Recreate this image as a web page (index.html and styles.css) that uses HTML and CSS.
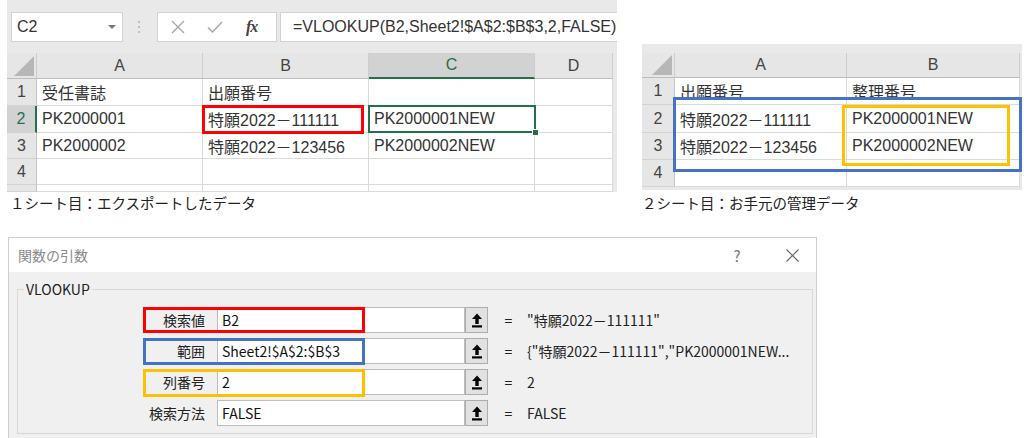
FILE: index.html
```html
<!DOCTYPE html>
<html lang="ja">
<head>
<meta charset="utf-8">
<title>VLOOKUP</title>
<link rel="stylesheet" href="styles.css">
</head>
<body>
<div class="top">
  <div class="s1">
    <div class="fbar">
      <div class="namebox"><span>C2</span><svg class="dd" width="8" height="4" viewBox="0 0 8 4"><path d="M0 0H8L4 4Z" fill="#777"/></svg></div>
      <svg class="dots" width="6" height="16" viewBox="0 0 6 16"><circle cx="3" cy="3" r="1.1" fill="#b5b5b5"/><circle cx="3" cy="8" r="1.1" fill="#b5b5b5"/><circle cx="3" cy="13" r="1.1" fill="#b5b5b5"/></svg>
      <div class="fxbox">
        <svg class="ic-x" width="14" height="14" viewBox="0 0 14 14"><path d="M1 1L13 13M13 1L1 13" stroke="#a6a6a6" stroke-width="1.3" fill="none"/></svg>
        <svg class="ic-ok" width="16" height="14" viewBox="0 0 16 14"><path d="M1 7.5L5.5 12L15 2" stroke="#a6a6a6" stroke-width="1.4" fill="none"/></svg>
        <span class="fx">fx</span>
      </div>
      <div class="formula">=VLOOKUP(B2,Sheet2!$A$2:$B$3,2,FALSE)</div>
    </div>
    <div class="g1">
      <div class="c h corner"><svg width="20" height="20" viewBox="0 0 20 20"><path d="M20 0V20H0Z" fill="#b7b7b7"/></svg></div>
      <div class="c h">A</div>
      <div class="c h">B</div>
      <div class="c h hsel">C</div>
      <div class="c h">D</div>

      <div class="c rh">1</div>
      <div class="c">受任書誌</div>
      <div class="c">出願番号</div>
      <div class="c"></div>
      <div class="c"></div>

      <div class="c rh rsel">2</div>
      <div class="c">PK2000001</div>
      <div class="c">特願2022－111111</div>
      <div class="c">PK2000001NEW</div>
      <div class="c"></div>

      <div class="c rh">3</div>
      <div class="c">PK2000002</div>
      <div class="c">特願2022－123456</div>
      <div class="c">PK2000002NEW</div>
      <div class="c"></div>

      <div class="c rh">4</div>
      <div class="c"></div>
      <div class="c"></div>
      <div class="c"></div>
      <div class="c"></div>

      <div class="c rh"></div>
      <div class="c"></div>
      <div class="c"></div>
      <div class="c"></div>
      <div class="c"></div>

      <span class="ov red1"></span>
      <span class="ov sel"><span class="handle"></span></span>
    </div>
    <div class="cap">１シート目：エクスポートしたデータ</div>
  </div>

  <div class="s2">
    <div class="g2wrap">
      <div class="g2">
        <div class="c h corner"><svg width="20" height="20" viewBox="0 0 20 20"><path d="M20 0V20H0Z" fill="#b7b7b7"/></svg></div>
        <div class="c h">A</div>
        <div class="c h">B</div>

        <div class="c rh">1</div>
        <div class="c">出願番号</div>
        <div class="c">整理番号</div>

        <div class="c rh">2</div>
        <div class="c">特願2022－111111</div>
        <div class="c">PK2000001NEW</div>

        <div class="c rh">3</div>
        <div class="c">特願2022－123456</div>
        <div class="c">PK2000002NEW</div>

        <div class="c rh">4</div>
        <div class="c"></div>
        <div class="c"></div>

        <span class="ov blue2"></span>
        <span class="ov yel2"></span>
      </div>
    </div>
    <div class="cap cap2">２シート目：お手元の管理データ</div>
  </div>
</div>

<div class="dialog">
  <div class="titlebar">
    <span class="title">関数の引数</span>
    <span class="q">?</span>
    <svg class="close" width="13" height="13" viewBox="0 0 13 13"><path d="M0.5 0.5L12.5 12.5M12.5 0.5L0.5 12.5" stroke="#666" stroke-width="1.1" fill="none"/></svg>
  </div>
  <div class="body">
    <div class="group">
      <span class="legend">VLOOKUP</span>
      <div class="row">
        <span class="lbl">検索値</span>
        <span class="inp">B2</span>
        <span class="btn"><svg width="12" height="15" viewBox="0 0 12 15"><path d="M6 0.5L1 6H4.3V11H7.7V6H11Z" fill="#000"/><rect x="1" y="12.3" width="10" height="2.2" fill="#000"/></svg></span>
        <span class="eq">=</span>
        <span class="val">"特願2022－111111"</span>
        <span class="ann a-red"></span>
      </div>
      <div class="row">
        <span class="lbl">範囲</span>
        <span class="inp">Sheet2!$A$2:$B$3</span>
        <span class="btn"><svg width="12" height="15" viewBox="0 0 12 15"><path d="M6 0.5L1 6H4.3V11H7.7V6H11Z" fill="#000"/><rect x="1" y="12.3" width="10" height="2.2" fill="#000"/></svg></span>
        <span class="eq">=</span>
        <span class="val">{"特願2022－111111","PK2000001NEW...</span>
        <span class="ann a-blue"></span>
      </div>
      <div class="row">
        <span class="lbl">列番号</span>
        <span class="inp">2</span>
        <span class="btn"><svg width="12" height="15" viewBox="0 0 12 15"><path d="M6 0.5L1 6H4.3V11H7.7V6H11Z" fill="#000"/><rect x="1" y="12.3" width="10" height="2.2" fill="#000"/></svg></span>
        <span class="eq">=</span>
        <span class="val">2</span>
        <span class="ann a-yel"></span>
      </div>
      <div class="row">
        <span class="lbl">検索方法</span>
        <span class="inp">FALSE</span>
        <span class="btn"><svg width="12" height="15" viewBox="0 0 12 15"><path d="M6 0.5L1 6H4.3V11H7.7V6H11Z" fill="#000"/><rect x="1" y="12.3" width="10" height="2.2" fill="#000"/></svg></span>
        <span class="eq">=</span>
        <span class="val">FALSE</span>
      </div>
    </div>
  </div>
</div>
</body>
</html>
```

FILE: styles.css
```css
html, body {
  margin: 0;
  padding: 0;
  overflow: hidden;
  background: #fff;
}
body {
  width: 1024px;
  height: 438px;
  font-family: "Liberation Sans", "Noto Sans CJK JP", sans-serif;
  color: #333;
}
* { box-sizing: border-box; }

.top {
  display: flex;
  height: 237px;
  align-items: flex-start;
}

/* ---------- sheet 1 ---------- */
.s1 {
  margin-left: 7px;
  width: 610px;
}
.fbar {
  height: 53px;
  background: #e9e9e9;
  display: flex;
  align-items: flex-start;
  padding: 12px 0 0 4px;
}
.namebox {
  width: 112px;
  height: 30px;
  background: #fff;
  border: 1px solid #d2d2d2;
  display: flex;
  align-items: center;
  padding-left: 5px;
  font-size: 16px;
  color: #333;
}
.namebox span { flex: 1; }
.dd { margin-right: 6px; }
.dots {
  margin: 7px 0 0 13px;
}
.fxbox {
  margin-left: 15px;
  width: 120px;
  height: 30px;
  background: #fff;
  border: 1px solid #d2d2d2;
  display: flex;
  align-items: center;
  padding-left: 13px;
}
.ic-ok { margin-left: 22px; }
.fx {
  margin-left: 23px;
  font-family: "Liberation Serif", serif;
  font-style: italic;
  font-weight: bold;
  font-size: 16px;
  color: #444;
  letter-spacing: -1px;
}
.formula {
  margin-left: 3px;
  flex: 1;
  height: 30px;
  background: #fff;
  border: 1px solid #d2d2d2;
  border-right: none;
  padding-left: 12px;
  font-size: 16px;
  line-height: 28px;
  color: #333;
  white-space: nowrap;
  overflow: hidden;
}

.g1, .g2 {
  display: grid;
  position: relative;
  background: #e9e9e9;
  font-size: 16px;
}
.g1 {
  grid-template-columns: 30px 166px 166px 166px 78px;
  grid-template-rows: 26px 27px 27px 26px 26px 7px;
  width: 610px;
}
.c {
  background: #fff;
  border-right: 1px solid #dadada;
  border-bottom: 1px solid #dadada;
  display: flex;
  align-items: center;
  padding-left: 5px;
  white-space: nowrap;
  overflow: hidden;
  color: #333;
}
.h {
  background: #e6e6e6;
  justify-content: center;
  padding-left: 0;
  border-right-color: #cdcdcd;
  border-bottom-color: #bcbcbc;
  color: #444;
}
.corner {
  justify-content: flex-end;
  align-items: flex-end;
  padding: 0 2px 2px 0;
}
.hsel {
  background: #d2d2d2;
  color: #217346;
  border-bottom: 2px solid #217346;
}
.rh {
  background: #e6e6e6;
  justify-content: center;
  padding-left: 0;
  border-right-color: #c4c4c4;
  border-bottom-color: #d2d2d2;
  color: #444;
}
.rsel {
  background: #d2d2d2;
  color: #217346;
  border-right: 2px solid #217346;
}

.ov {
  position: absolute;
  display: block;
}
.red1 {
  left: 195px;
  top: 52px;
  width: 162px;
  height: 29px;
  border: 3px solid #ff0000;
}
.sel {
  left: 361px;
  top: 52px;
  width: 168px;
  height: 28px;
  border: 2px solid #217346;
}
.handle {
  position: absolute;
  right: -5px;
  bottom: -5px;
  width: 7px;
  height: 7px;
  background: #217346;
  border: 1px solid #fff;
}

.cap {
  margin-top: 1px;
  font-family: "Noto Sans CJK JP", sans-serif;
  font-size: 14.5px;
  line-height: 20px;
  color: #222;
  padding-left: 3px;
}

/* ---------- sheet 2 ---------- */
.s2 {
  margin-left: 25px;
  margin-top: 44px;
  width: 380px;
}
.g2wrap {
  background: #e9e9e9;
  padding: 9px 0 3px 0;
}
.g2 {
  grid-template-columns: 33px 172px 173px;
  grid-template-rows: 25px 27px 28px 27px 27px;
  width: 380px;
}
.blue2 {
  left: 31px;
  top: 44px;
  width: 349px;
  height: 75px;
  border: 3px solid #4472c4;
}
.yel2 {
  left: 200px;
  top: 52px;
  width: 168px;
  height: 61px;
  border: 3px solid #ffc000;
}
.cap2 {
  margin-top: 3px;
  padding-left: 0;
}

/* ---------- dialog ---------- */
.dialog {
  margin-left: 8px;
  width: 809px;
  height: 240px;
  border: 1px solid #cfcfcf;
  background: #f0f0f0;
  font-family: "Noto Sans CJK JP", sans-serif;
  font-size: 14px;
  color: #222;
}
.titlebar {
  height: 34px;
  background: #fff;
  display: flex;
  align-items: center;
  padding: 0 17px 0 9px;
}
.title {
  flex: 1;
  color: #8a8a8a;
}
.q {
  width: 12px;
  text-align: center;
  color: #777;
  font-size: 15px;
}
.close {
  margin-left: 43px;
}
.body {
  padding: 17px 3px 0 8px;
}
.group {
  position: relative;
  border: 1px solid #d9d9d9;
  padding: 17px 0 7px 125px;
}
.legend {
  position: absolute;
  left: 6px;
  top: -11px;
  padding: 0 2px;
  background: #f0f0f0;
  line-height: 20px;
  color: #222;
}
.row {
  position: relative;
  display: flex;
  align-items: center;
  height: 26px;
  margin-bottom: 5px;
}
.row:last-child { margin-bottom: 0; }
.lbl {
  width: 74px;
  text-align: right;
  padding-right: 12px;
  line-height: 26px;
}
.inp {
  width: 248px;
  height: 26px;
  background: #fff;
  border: 1px solid #bdbdbd;
  padding-left: 4px;
  line-height: 24px;
  color: #111;
  white-space: nowrap;
}
.btn {
  width: 23px;
  height: 26px;
  background: #e1e1e1;
  border: 1px solid #adadad;
  display: flex;
  align-items: center;
  justify-content: center;
}
.eq {
  margin-left: 16px;
  width: 9px;
  text-align: center;
}
.val {
  margin-left: 14px;
  white-space: nowrap;
}
.ann {
  position: absolute;
  left: 0;
  top: 0;
  width: 222px;
  height: 26px;
  border: 3px solid;
}
.a-red { border-color: #ff0000; }
.a-blue { border-color: #4472c4; height: 27px; }
.a-yel { border-color: #ffc000; height: 28px; }
```
